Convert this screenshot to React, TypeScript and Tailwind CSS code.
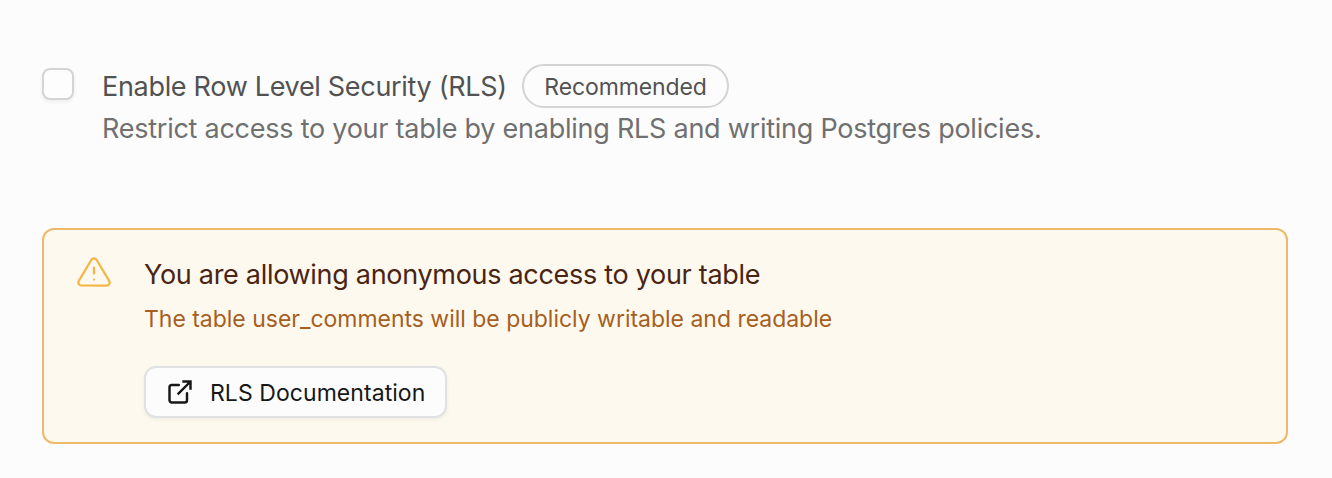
const font = 'font-["Inter",sans-serif]'

function WarningIcon() {
  return (
    <svg className="size-9 shrink-0 text-[#f5b544]" viewBox="0 0 24 24" fill="none" stroke="currentColor" strokeWidth="1.5" strokeLinecap="round" strokeLinejoin="round">
      <path d="M10.29 3.86 1.82 18a2 2 0 0 0 1.71 3h16.94a2 2 0 0 0 1.71-3L13.71 3.86a2 2 0 0 0-3.42 0z" />
      <path d="M12 9v4M12 17h.01" />
    </svg>
  )
}

function ExternalLinkIcon() {
  return (
    <svg className="size-7 shrink-0" viewBox="0 0 24 24" fill="none" stroke="currentColor" strokeWidth="2.1">
      <path d="M18 13v6a2 2 0 0 1-2 2H5a2 2 0 0 1-2-2V8a2 2 0 0 1 2-2h6" strokeLinecap="round" />
      <path d="M14 3h7v7M10 14 21 3" />
    </svg>
  )
}

export default function App() {
  return (
    <main className={`h-[478px] w-[1332px] bg-[#fcfcfc] pt-16 pl-[42px] whitespace-nowrap ${font}`}>
      <label className="flex h-[164px] items-start gap-7">
        <span className="mt-1 size-8 shrink-0 rounded-[8px] border-2 border-[#d4d4d4] bg-[#fdfdfd] shadow-[0_2px_4px_rgba(0,0,0,0.06)]" />
        <span className="flex flex-col">
          <span className="flex h-11 items-center text-[#525252]">
            <span className="w-[420px] pt-0.5 text-[27px] leading-[40px] tracking-[-0.31px]">Enable Row Level Security (RLS)</span>
            <span className="flex h-11 w-[207px] items-center justify-center rounded-full border-2 border-[#d4d4d4] pt-0.5 text-[23px] tracking-[-0.12px]">Recommended</span>
          </span>
          <span className="pt-px text-[27px] leading-[40px] tracking-[-0.25px] text-[#707070]">Restrict access to your table by enabling RLS and writing Postgres policies.</span>
        </span>
      </label>
      <section className="flex h-[216px] w-[1246px] items-start gap-8 rounded-xl border-2 border-[#edb96b] bg-[#fef9ee] pt-6 pl-8">
        <WarningIcon />
        <div className="flex flex-col items-start pt-px">
          <h2 className="text-[27px] leading-[40px] tracking-[-0.3px] text-[#4a2412]">You are allowing anonymous access to your table</h2>
          <p className="mt-1 text-[23px] leading-[40px] tracking-[-0.02px] text-[#a65f21]">The table user_comments will be publicly writable and readable</p>
          <button className="mt-[27px] flex h-[52px] w-[303px] items-center gap-[16px] rounded-xl border-2 border-[#dfe1e3] bg-[#fcfcfc] pl-5 text-[23px] text-[#171717] shadow-[0_2px_4px_rgba(0,0,0,0.05)]">
            <ExternalLinkIcon />
            <span className="pt-0.5 tracking-[0.06px]">RLS Documentation</span>
          </button>
        </div>
      </section>
    </main>
  )
}
